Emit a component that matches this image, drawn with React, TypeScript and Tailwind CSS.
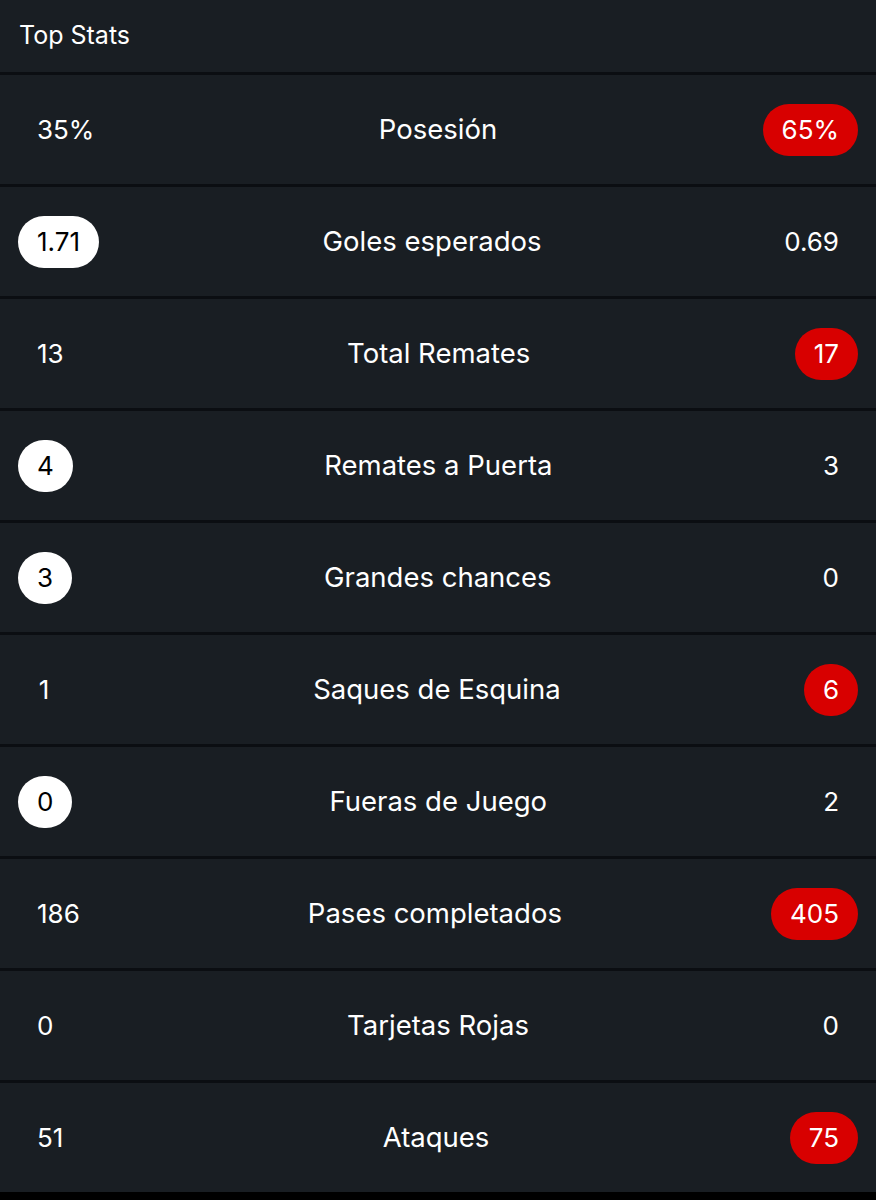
type Side = 'none' | 'left' | 'right';

interface StatRow {
  label: string;
  home: string;
  away: string;
  lead: Side;
}

const stats: StatRow[] = [
  { label: 'Posesión', home: '35%', away: '65%', lead: 'right' },
  { label: 'Goles esperados', home: '1.71', away: '0.69', lead: 'left' },
  { label: 'Total Remates', home: '13', away: '17', lead: 'right' },
  { label: 'Remates a Puerta', home: '4', away: '3', lead: 'left' },
  { label: 'Grandes chances', home: '3', away: '0', lead: 'left' },
  { label: 'Saques de Esquina', home: '1', away: '6', lead: 'right' },
  { label: 'Fueras de Juego', home: '0', away: '2', lead: 'left' },
  { label: 'Pases completados', home: '186', away: '405', lead: 'right' },
  { label: 'Tarjetas Rojas', home: '0', away: '0', lead: 'none' },
  { label: 'Ataques', home: '51', away: '75', lead: 'right' },
];

function Value({ value, highlight, side }: { value: string; highlight: boolean; side: 'left' | 'right' }) {
  const tone = !highlight
    ? 'text-white'
    : side === 'left'
      ? 'bg-white text-black'
      : 'bg-[#d80000] text-white';
  return (
    <span
      className={`inline-flex h-[52px] min-w-[52px] shrink-0 items-center justify-center rounded-full px-[19px] text-[26px] leading-none ${tone}`}
    >
      {value}
    </span>
  );
}

export default function App() {
  return (
    <div className="min-h-[1200px] w-[876px] bg-black font-['Inter',sans-serif]">
      <div className="bg-[#191e23]">
        <div className="flex h-[72px] items-center px-[19px] pb-[1px] text-[25px] text-white">Top Stats</div>
        {stats.map(row => (
          // label sits centred in whatever space the two values leave
          <div
            key={row.label}
            className="flex h-[112px] items-center border-t-[3px] border-[#0b0e12] px-[18px]"
          >
            <Value value={row.home} highlight={row.lead === 'left'} side="left" />
            <div className="flex-1 text-center text-[27.5px] leading-none text-white">{row.label}</div>
            <Value value={row.away} highlight={row.lead === 'right'} side="right" />
          </div>
        ))}
      </div>
    </div>
  );
}
